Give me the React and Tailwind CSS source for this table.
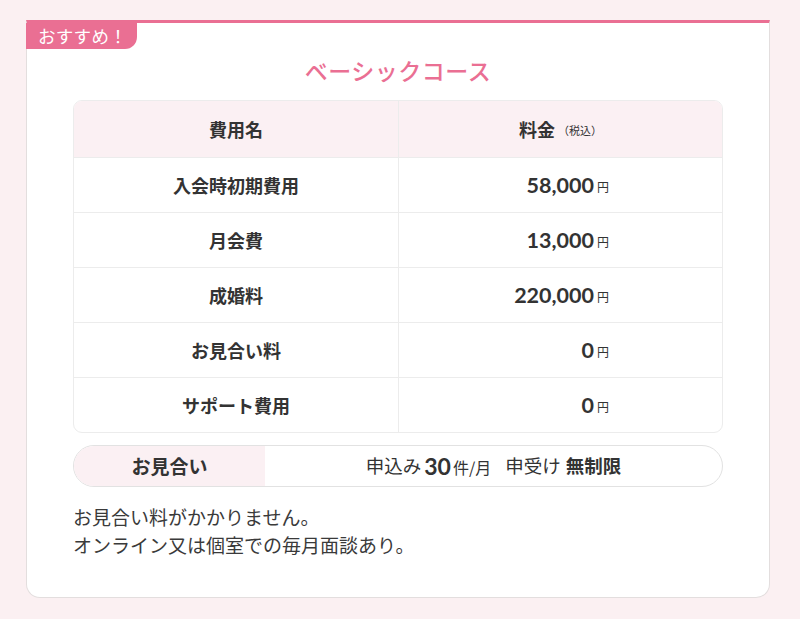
import React from "react";

const rows = [
  { name: "入会時初期費用", price: "58,000" },
  { name: "月会費", price: "13,000" },
  { name: "成婚料", price: "220,000" },
  { name: "お見合い料", price: "0" },
  { name: "サポート費用", price: "0" },
];

const jp = { fontFamily: '"Noto Sans CJK JP", "Noto Sans", sans-serif' };
const num = { fontFamily: 'Lato, "Noto Sans CJK JP", sans-serif' };

function App() {
  return (
    <div className="min-h-[619px] w-[800px] bg-[#fbf0f2] pt-[20px] text-[#333]" style={jp}>
      <div className="relative ml-[26px] w-[744px] rounded-b-[14px] border-x border-b border-t-[3px] border-x-[#e3dede] border-b-[#e3dede] border-t-[#ea6f93] bg-white px-[46px] pb-[38px] pt-[31px]">
        <div className="absolute left-[-1px] top-0 flex h-[26px] items-center rounded-br-[12px] bg-[#ea6f93] pl-[12px] pr-[10px] text-[17.5px] leading-none tracking-[0.3px] text-white">
          おすすめ！
        </div>

        <h2 className="text-center text-[23px] font-medium leading-[32px] tracking-[0.5px] text-[#ea6f93]">
          ベーシックコース
        </h2>

        <div className="mt-[14px] overflow-hidden rounded-[9px] border border-[#ececec]">
          <div className="grid h-[56px] grid-cols-[325px_1fr] bg-[#fbf0f3]">
            <div className="flex items-center justify-center border-r border-[#ececec] text-[18px] font-bold">
              費用名
            </div>
            <div className="flex items-center justify-center text-[18px] font-bold">
              料金<span className="ml-[3px] mt-[3px] text-[11px] font-normal">（税込）</span>
            </div>
          </div>
          {rows.map((row) => (
            <div key={row.name} className="grid h-[55px] grid-cols-[325px_1fr] border-t border-[#ececec]">
              <div className="flex items-center justify-center border-r border-[#ececec] text-[18px] font-bold">
                {row.name}
              </div>
              <div className="flex items-center justify-end pr-[113px]">
                <span className="text-[21.5px] font-bold" style={num}>{row.price}</span>
                <span className="ml-[3px] mt-[4px] text-[12px]">円</span>
              </div>
            </div>
          ))}
        </div>

        <div className="mt-[12px] flex h-[42px] overflow-hidden rounded-full border border-[#e2e2e2]">
          <div className="flex w-[191px] items-center justify-center bg-[#fbf0f3] text-[19px] font-bold">
            お見合い
          </div>
          <div className="flex flex-1 items-center justify-center text-[18.5px]">
            申込み
            <span className="ml-[3px] text-[23px] font-bold" style={num}>30</span>
            <span className="ml-[2px] mt-[2px] text-[16px]">件/月</span>
            <span className="ml-[14px]">申受け</span>
            <span className="ml-[5px] font-bold">無制限</span>
          </div>
        </div>

        <div className="mt-[16px] text-[19px] leading-[28px] text-[#3a3a3a]">
          <p>お見合い料がかかりません。</p>
          <p>オンライン又は個室での毎月面談あり。</p>
        </div>
      </div>
    </div>
  );
}

export default App;
